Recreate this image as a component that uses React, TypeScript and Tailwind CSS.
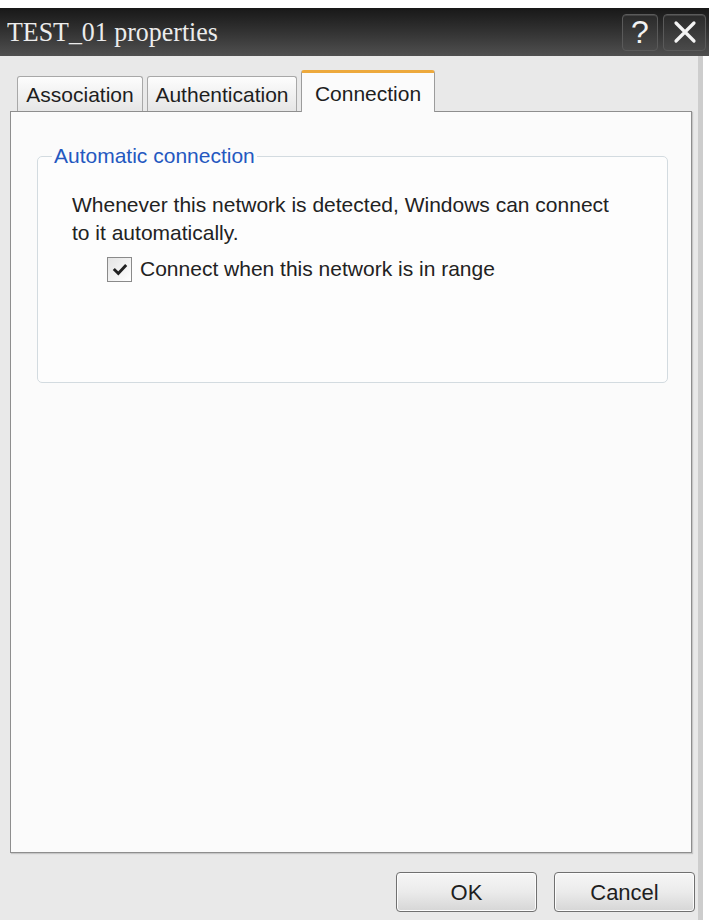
import React from 'react'

const tabs = [
  { id: 'association', label: 'Association', width: 'w-[126px]' },
  { id: 'authentication', label: 'Authentication', width: 'w-[150px]' },
  { id: 'connection', label: 'Connection', width: 'w-[134px]', active: true },
]

function TitleButton({ children }: { children: React.ReactNode }) {
  return (
    <div className="flex h-[37px] items-center justify-center rounded-[4px] border border-[#5a5a5a] bg-gradient-to-b from-[#2a2a2a] to-[#4a4a4a] shadow-[inset_0_1px_0_rgba(255,255,255,0.12)]">
      {children}
    </div>
  )
}

function DialogButton({ label }: { label: string }) {
  return (
    <button className="flex h-[40px] w-[141px] items-center justify-center rounded-[4px] border border-[#707070] bg-gradient-to-b from-[#f6f6f6] via-[#ebebeb] to-[#d6d6d6] text-[22px] text-[#1e1e1e] shadow-[inset_0_0_0_1px_#fcfcfc]">
      {label}
    </button>
  )
}

export default function App() {
  return (
    <div className="flex h-[920px] w-[709px] flex-col bg-white font-['Liberation_Sans',Arial,sans-serif]">
      <div className="h-[8px] bg-white" />

      {/* title bar */}
      <div className="flex h-[48px] items-center justify-between bg-gradient-to-b from-[#181818] to-[#505050] pl-[7px] pr-[3px]">
        <span className="inline-block origin-left scale-x-[0.96] font-['Liberation_Serif',serif] text-[27px] leading-none text-[#ececec]">
          TEST_01 properties
        </span>
        <div className="flex gap-[5px]">
          <div className="w-[36px]">
            <TitleButton>
              <span className="text-[32px] leading-none text-[#f2f2f2]">?</span>
            </TitleButton>
          </div>
          <div className="w-[43px]">
            <TitleButton>
              <svg width="24" height="24" viewBox="0 0 24 24">
                <path d="M3 3 L21 21 M21 3 L3 21" stroke="#f4f4f4" strokeWidth="3.2" strokeLinecap="round" />
              </svg>
            </TitleButton>
          </div>
        </div>
      </div>

      {/* body */}
      <div className="flex w-[703px] flex-1 flex-col border-r-[5px] border-[#cdcdcd] bg-[#e9e9e9] pl-[10px] pt-[14px]">
        <div className="flex items-end gap-[4px] pl-[7px]">
          {tabs.map((tab) =>
            tab.active ? (
              <div
                key={tab.id}
                className={`${tab.width} relative z-10 -mb-[1px] flex h-[42px] items-start justify-center rounded-t-[3px] border-x border-t-[3px] border-x-[#9c9c9c] border-t-[#eda93c] bg-[#fbfbfb] pt-[5px] text-[21px] text-[#1e1e1e]`}
              >
                {tab.label}
              </div>
            ) : (
              <div
                key={tab.id}
                className={`${tab.width} flex h-[35px] items-center justify-center rounded-t-[3px] border-x border-t border-[#a8a8a8] bg-gradient-to-b from-[#fdfdfd] to-[#e6e6e6] pt-[2px] text-[21px] text-[#1e1e1e]`}
              >
                {tab.label}
              </div>
            )
          )}
        </div>

        <div className="h-[742px] w-[682px] border border-[#8e8e8e] bg-[#fbfbfb] pl-[26px] pr-[23px] pt-[32px] shadow-[1px_1px_1px_rgba(0,0,0,0.15)]">
          <fieldset className="h-[239px] rounded-[5px] border border-[#d3dbe0] bg-[#fdfdfd] pl-[34px] pr-[10px] pt-[23px]">
            <legend className="-ml-[20px] px-[2px] text-[21px] leading-[24px] text-[#2458c0]">
              Automatic connection
            </legend>
            <p className="text-[21px] leading-[28px] text-[#222]">
              Whenever this network is detected, Windows can connect
              <br />
              to it automatically.
            </p>
            <label className="mt-[8px] flex h-[28px] items-center gap-[8px] pl-[35px] text-[21px] text-[#222]">
              <span className="flex h-[25px] w-[25px] items-center justify-center border border-[#8a8a8a] bg-gradient-to-br from-[#e4e4e4] to-white">
                <svg width="18" height="18" viewBox="0 0 16 16">
                  <path d="M2.5 8 L6.5 12 L13.5 4.5" fill="none" stroke="#222" strokeWidth="2.6" />
                </svg>
              </span>
              Connect when this network is in range
            </label>
          </fieldset>
        </div>

        <div className="mt-[19px] flex w-[685px] justify-end gap-[17px]">
          <DialogButton label="OK" />
          <DialogButton label="Cancel" />
        </div>
      </div>
    </div>
  )
}
